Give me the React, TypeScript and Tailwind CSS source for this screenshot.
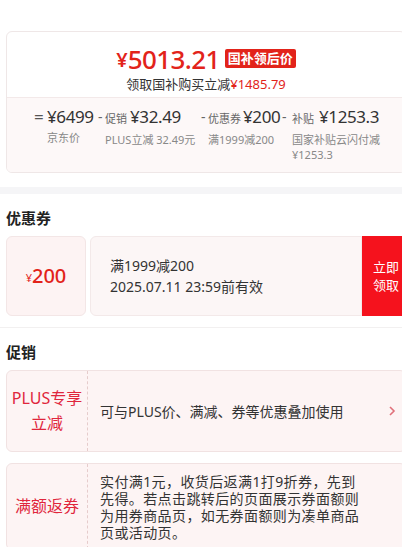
import React from "react";

const red = "text-[#e2231a]";

const Breakdown = () => (
  <div className="flex items-start bg-[#fdf8f8] border-t border-[#f3e9e9] h-[75px] pl-[27px] pt-[8px] text-[#333]">
    <span className="w-[13px] text-[17px] leading-[22px] text-[#555]">=</span>
    <div className="w-[51px] flex flex-col">
      <span className="text-[17px] leading-[22px] tracking-[-0.4px]">¥6499</span>
      <span className="text-[11px] leading-[15px] text-[#888] mt-[2px]">京东价</span>
    </div>
    <span className="w-[7px] text-[14px] leading-[22px] text-[#666]">-</span>
    <div className="w-[96px] flex flex-col">
      <span className="leading-[22px] whitespace-nowrap">
        <span className="text-[11px] text-[#666]">促销</span>
        <span className="text-[17px] ml-[3px] tracking-[-0.4px]">¥32.49</span>
      </span>
      <span className="text-[11px] leading-[15px] text-[#888] mt-[2px] whitespace-nowrap">PLUS立减 32.49元</span>
    </div>
    <span className="w-[7px] text-[14px] leading-[22px] text-[#666]">-</span>
    <div className="w-[74px] flex flex-col">
      <span className="leading-[22px] whitespace-nowrap">
        <span className="text-[11px] text-[#666]">优惠券</span>
        <span className="text-[17px] ml-[2px] tracking-[-0.4px]">¥200</span>
      </span>
      <span className="text-[11px] leading-[15px] text-[#888] mt-[2px] whitespace-nowrap">满1999减200</span>
    </div>
    <span className="w-[10px] text-[14px] leading-[22px] text-[#666]">-</span>
    <div className="flex flex-col">
      <span className="leading-[22px] whitespace-nowrap">
        <span className="text-[11px] text-[#666]">补贴</span>
        <span className="text-[17px] ml-[5px] tracking-[-0.4px]">¥1253.3</span>
      </span>
      <span className="text-[11px] leading-[15px] text-[#888] mt-[2px] whitespace-nowrap">国家补贴云闪付减</span>
      <span className="text-[11px] leading-[16px] text-[#888]">¥1253.3</span>
    </div>
  </div>
);

const PromoCard = ({ label, children, chevron }: { label: React.ReactNode; children: React.ReactNode; chevron?: boolean }) => (
  <div className="flex bg-[#fdf4f4] border border-[#f1e2e2] rounded-[6px] min-h-[82px]">
    <div className="w-[81px] shrink-0 flex items-center justify-center text-center border-r border-dashed border-[#e6cccc] text-[16px] leading-[25px] text-[#e0263c]">
      {label}
    </div>
    <div className="flex-1 flex items-center pl-[12px] pr-[12px] text-[14px] text-[#333]">{children}</div>
    {chevron && (
      <div className="flex items-center pr-[9px] text-[#e0707a]">
        <svg width="8" height="12" viewBox="0 0 8 12" fill="none">
          <path d="M2 2l4 4-4 4" stroke="currentColor" strokeWidth="1.6" />
        </svg>
      </div>
    )}
  </div>
);

export default function App() {
  return (
    <div className="w-[402px] h-[547px] overflow-hidden bg-white font-['Noto_Sans','Noto_Sans_CJK_SC',sans-serif]">
      <div className="w-[412px] px-[6px]">
        <div className="h-[31px]" />
        <div className="border border-[#efe7e7] rounded-[6px] overflow-hidden">
          <div className="flex flex-col items-center h-[65px] pt-[10px]">
            <div className="flex items-center">
              <span className={`${red} text-[20px] font-semibold leading-[30px] mt-[3px]`}>¥</span>
              <span className={`${red} text-[26px] font-medium leading-[30px] tracking-[-0.6px]`}>5013.21</span>
              <span className="ml-[5px] bg-[#e2231a] text-white text-[13px] font-bold leading-[19px] px-[3px] rounded-[2px]">国补领后价</span>
            </div>
            <div className="text-[13px] leading-[18px] text-[#333]">
              领取国补购买立减<span className={red}>¥1485.79</span>
            </div>
          </div>
          <Breakdown />
        </div>
      </div>
      <div className="h-[7px] bg-[#f5f5f7] mt-[14px]" />
      <div className="w-[412px] px-[6px]">
        <div className="text-[15px] font-bold text-[#222] leading-[20px] mt-[14px]">优惠券</div>
        <div className="flex h-[80px] mt-[8px]">
          <div className="w-[80px] shrink-0 flex items-center justify-center bg-[#fdf3f3] border border-[#f3e6e6] rounded-[6px] text-[#e2231a]">
            <span className="text-[11px] mt-[4px]">¥</span>
            <span className="text-[20px] font-medium">200</span>
          </div>
          <div className="flex-1 ml-[4px] flex flex-col justify-center pl-[19px] bg-[#fcf6f6] border border-[#f3e9e9] rounded-l-[6px] text-[14px] text-[#333] leading-[21px]">
            <span>满1999减200</span>
            <span>2025.07.11 23:59前有效</span>
          </div>
          <div className="w-[44px] shrink-0 flex items-center pl-[11px] bg-[#f5121d] text-white text-[13px] leading-[18px]">
            立即
            <br />
            领取
          </div>
        </div>
      </div>
      <div className="h-px bg-[#f2f0f0] mt-[11px]" />
      <div className="w-[412px] px-[6px]">
        <div className="text-[15px] font-bold text-[#222] leading-[20px] mt-[14px]">促销</div>
        <div className="mt-[8px]">
          <PromoCard chevron label={<>PLUS专享<br />立减</>}>
            可与PLUS价、满减、券等优惠叠加使用
          </PromoCard>
        </div>
        <div className="mt-[11px]">
          <PromoCard label="满额返券">
            <div className="leading-[17px] tracking-[0.4px] pt-[9px] pb-[8px]">
              实付满1元，收货后返满1打9折券，先到
              <br />
              先得。若点击跳转后的页面展示券面额则
              <br />
              为用券商品页，如无券面额则为凑单商品
              <br />
              页或活动页。
            </div>
          </PromoCard>
        </div>
      </div>
    </div>
  );
}
